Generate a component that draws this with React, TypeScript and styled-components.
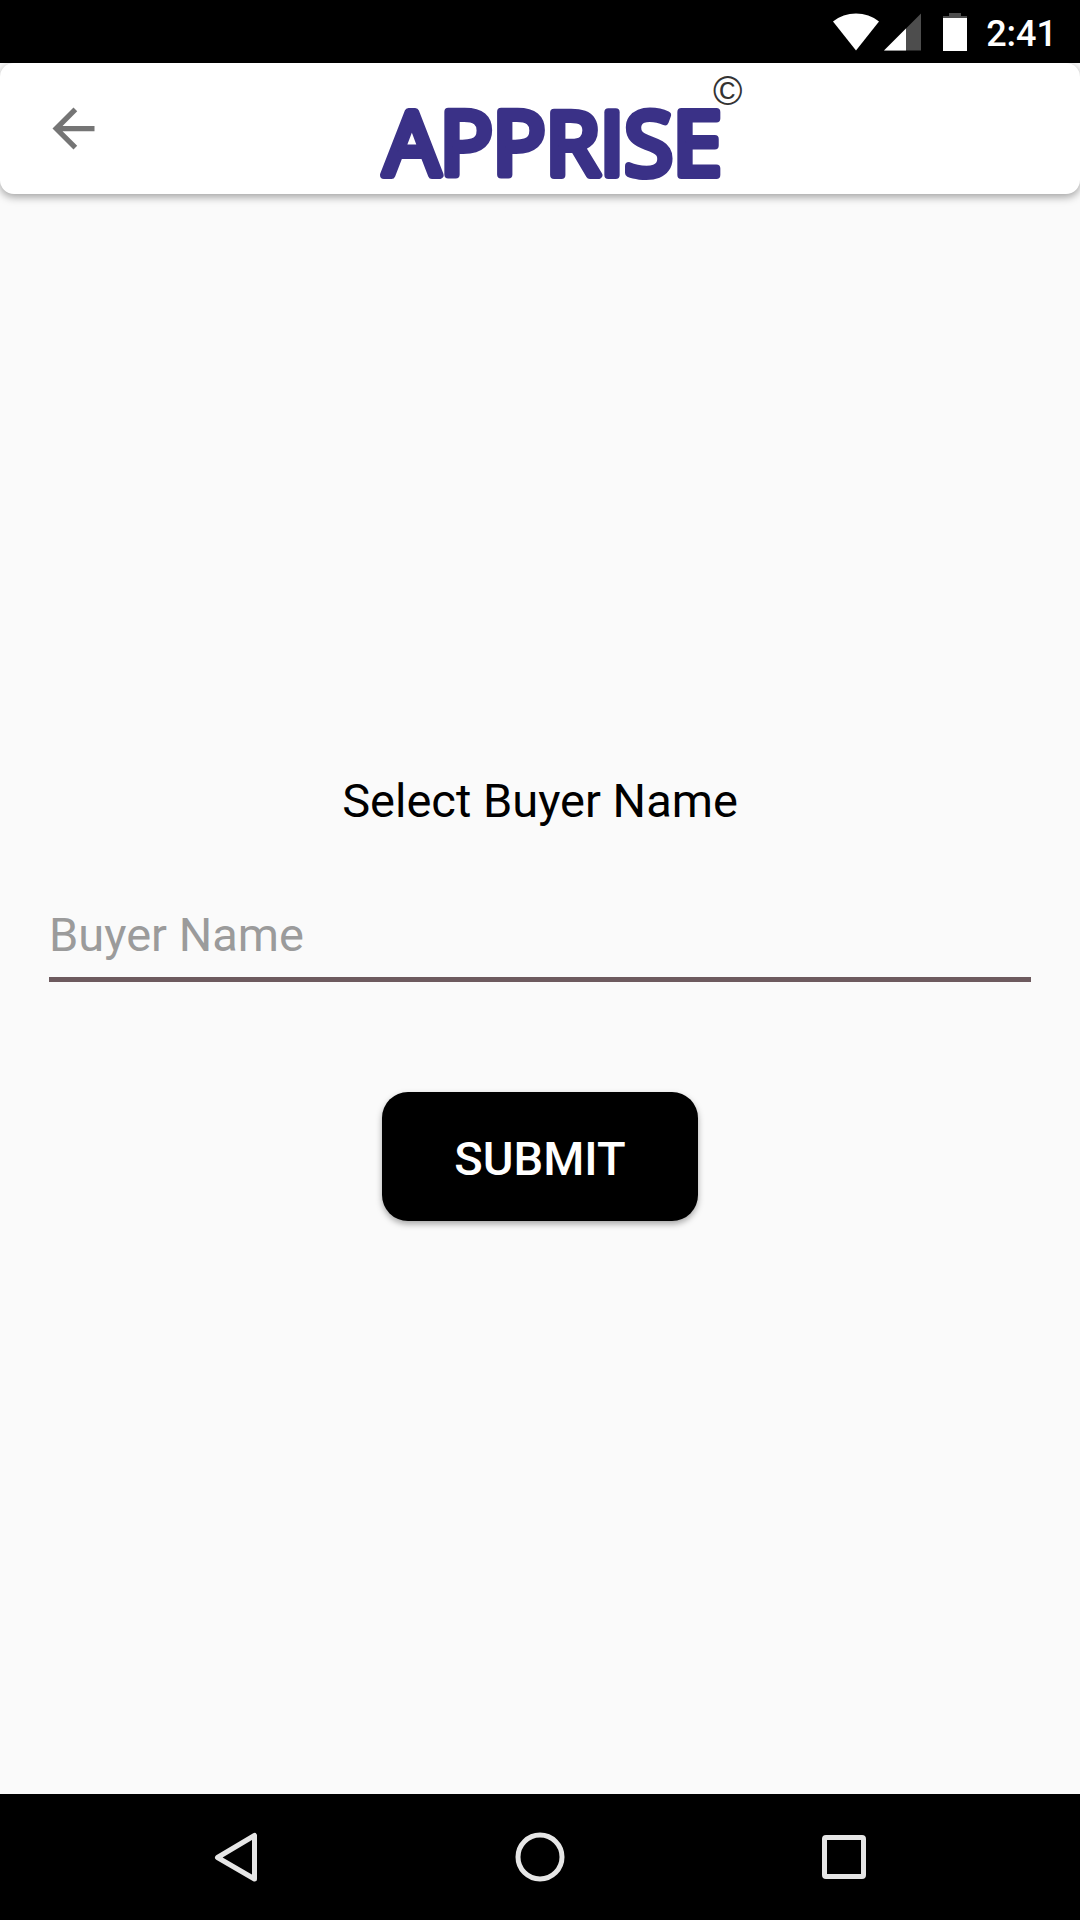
import React, { useState } from 'react';
import styled, { createGlobalStyle } from 'styled-components';

const GlobalStyle = createGlobalStyle`
  *, *::before, *::after { box-sizing: border-box; }
  body {
    margin: 0;
    background: #fafafa;
    font-family: Roboto, "Liberation Sans", sans-serif;
  }
`;

const Screen = styled.div`
  display: flex;
  flex-direction: column;
  min-height: 100vh;
`;

const StatusBar = styled.div`
  display: flex;
  justify-content: flex-end;
  align-items: center;
  height: 63px;
  padding: 0 23px;
  background: #000;
  color: #fff;
`;

const StatusIcon = styled.svg<{ $gap: number }>`
  display: block;
  flex: none;
  margin-right: ${({ $gap }) => $gap}px;
`;

const Clock = styled.time`
  padding-top: 4px;
  font-size: 36px;
  line-height: 44px;
  font-weight: 500;
`;

const Header = styled.header`
  display: grid;
  grid-template-columns: 1fr auto 1fr;
  align-items: center;
  height: 131px;
  padding-left: 42px;
  border-radius: 14px;
  background: #fff;
  box-shadow: 0 3px 8px rgba(0, 0, 0, 0.36);
`;

const IconButton = styled.button`
  display: flex;
  justify-content: center;
  align-items: center;
  justify-self: start;
  padding: 0;
  border: 0;
  background: none;
  cursor: pointer;
`;

const Logo = styled.svg`
  display: block;
  overflow: visible;
`;

const Wordmark = styled.text`
  fill: #3a3187;
  stroke: #3a3187;
  stroke-width: 8;
  stroke-linejoin: round;
  font-family: "Open Sans", "Noto Sans", sans-serif;
  font-size: 88px;
  font-weight: 400;
`;

const Copyright = styled.tspan`
  fill: #333;
  stroke: none;
  font-family: "Liberation Sans", sans-serif;
  font-size: 40px;
`;

const Form = styled.form`
  display: flex;
  flex: 1;
  flex-direction: column;
  justify-content: center;
  align-items: center;
  padding: 3px 49px 0;
`;

const Title = styled.label`
  color: #000;
  font-size: 47px;
  line-height: 60px;
`;

const BuyerInput = styled.input`
  width: 100%;
  height: 77px;
  margin: 74px 0 110px;
  padding: 0 0 12px;
  border: 0;
  border-bottom: 5px solid #6d5a5e;
  border-radius: 0;
  outline: 0;
  background: transparent;
  color: #000;
  font-family: inherit;
  font-size: 47px;
  line-height: 60px;

  &::placeholder {
    color: #9b9b9b;
    opacity: 1;
  }
`;

const SubmitButton = styled.button`
  min-width: 316px;
  height: 129px;
  padding: 6px 48px 0;
  border: 0;
  border-radius: 26px;
  background: #000;
  box-shadow: 0 3px 6px rgba(0, 0, 0, 0.34);
  color: #fff;
  font-family: inherit;
  font-size: 47px;
  line-height: 60px;
  font-weight: 500;
  cursor: pointer;
`;

const NavBar = styled.nav`
  display: flex;
  justify-content: center;
  align-items: center;
  gap: 240px;
  height: 126px;
  background: #000;
`;

const NavIcon = styled.svg`
  display: block;
  fill: none;
  stroke: #e6e6e6;
  stroke-width: 5;
  stroke-linejoin: round;
`;

export default function App() {
  const [buyer, setBuyer] = useState('');

  return (
    <>
      <GlobalStyle />
      <Screen>
        <StatusBar>
          <StatusIcon $gap={5} width="46" height="38" viewBox="0 0 46 38" aria-hidden="true">
            <path d="M23 37.5 0 8.5C6.500 3.300 14.500 .5 23 .5s16.500 2.800 23 8z" fill="#fff" />
          </StatusIcon>
          <StatusIcon $gap={22} width="37" height="38" viewBox="0 0 37 38" aria-hidden="true">
            <path d="M0 37.500 37 .5v37z" fill="#4d4d4d" />
            <path d="M0 37.500 22 15.500v22z" fill="#fff" />
          </StatusIcon>
          <StatusIcon $gap={19} width="24" height="38" viewBox="0 0 24 38" aria-hidden="true">
            <path d="M6 0h12v3h6v3H0V3h6z" fill="#4d4d4d" />
            <path d="M0 5h24v33H0z" fill="#fff" />
          </StatusIcon>
          <Clock>2:41</Clock>
        </StatusBar>

        <Header>
          <IconButton type="button" aria-label="Back">
            <svg width="63" height="63" viewBox="0 0 24 24" fill="#757575">
              <path d="M20 11H7.830l5.590-5.590L12 4l-8 8 8 8 1.410-1.410L7.830 13H20v-2z" />
            </svg>
          </IconButton>
          <Logo width="363" height="131" viewBox="0 0 363 131">
            <Wordmark x="4" y="112">
              APPRISE
              <Copyright x="333" y="42">©</Copyright>
            </Wordmark>
          </Logo>
        </Header>

        <Form onSubmit={(event) => event.preventDefault()}>
          <Title htmlFor="buyer">Select Buyer Name</Title>
          <BuyerInput
            id="buyer"
            type="text"
            placeholder="Buyer Name"
            value={buyer}
            onChange={(event) => setBuyer(event.target.value)}
          />
          <SubmitButton type="submit">SUBMIT</SubmitButton>
        </Form>

        <NavBar>
          <IconButton type="button" aria-label="System back">
            <NavIcon width="64" height="64" viewBox="0 0 64 64">
              <path d="M13.500 32.500 50.500 10.500v43.500z" />
            </NavIcon>
          </IconButton>
          <IconButton type="button" aria-label="Home">
            <NavIcon width="64" height="64" viewBox="0 0 64 64">
              <circle cx="32" cy="32" r="22" />
            </NavIcon>
          </IconButton>
          <IconButton type="button" aria-label="Recent apps">
            <NavIcon width="64" height="64" viewBox="0 0 64 64">
              <rect x="12.500" y="12.500" width="39" height="39" rx="1.500" />
            </NavIcon>
          </IconButton>
        </NavBar>
      </Screen>
    </>
  );
}
